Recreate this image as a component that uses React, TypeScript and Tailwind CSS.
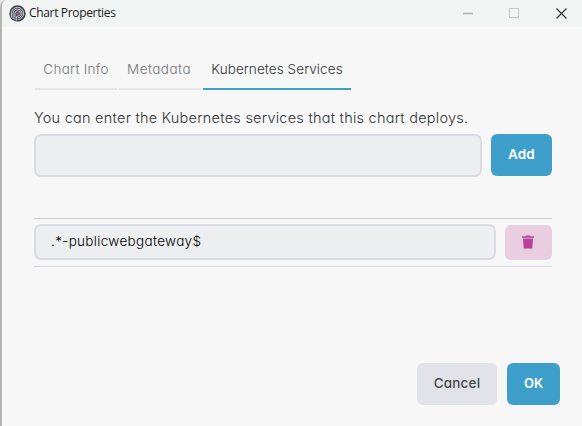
import { useState } from "react";

const tabs = [
  { label: "Chart Info", box: "w-[82px]", text: "tracking-[0.28px]" },
  { label: "Metadata", box: "w-[82px] pr-[2px]", text: "tracking-[0.45px]" },
  { label: "Kubernetes Services", box: "w-[148px]", text: "tracking-[0.08px]" },
];

function AppLogo() {
  return (
    <svg width="17" height="17" viewBox="0 0 17 17" fill="none">
      <circle cx="8.5" cy="8.5" r="8.2" fill="#41444d" />
      <g stroke="#d6d9dc" strokeWidth="0.9">
        <path d="M2.4 12.7V7.800a6.1 6.1 0 1 1 7 6.700" />
        <path d="M4.2 14V8a4.4 4.4 0 1 1 4.8 4.800" />
        <path d="M6 15.2V8.300a2.700 2.700 0 1 1 2.800 2.900H7.700v4.600" />
      </g>
      <circle cx="8.7" cy="8.5" r="1.3" fill="#d64cac" />
    </svg>
  );
}

function TrashIcon() {
  return (
    <svg className="mr-px mb-px" width="12" height="14" viewBox="0 0 12 14" fill="#bb419d">
      <path d="M4 0.400h4l0.700 0.900H12v1.400H0V1.300h3.300z" />
      <path d="M1 3.500h10l-0.600 9.200a1 1 0 0 1-1 0.900H2.600a1 1 0 0 1-1-0.900z" />
    </svg>
  );
}

export default function App() {
  const [active, setActive] = useState(2);
  return (
    <div className="h-[426px] w-[582px] overflow-hidden bg-[#e4e5e5]">
      <div className="flex h-[427px] w-[583px] flex-col overflow-hidden rounded-tl-[7px] border-l-2 border-[#b5b5b5] bg-[#f7f7f7] font-['Inter',sans-serif] text-[#44474a] [font-feature-settings:'cv11']">
        <header className="flex h-[27px] shrink-0 items-center bg-[#f2f4f3] pl-[7px]">
          <AppLogo />
          <h1 className="ml-[3px] pb-px font-['Open_Sans',sans-serif] text-[12px] leading-4 tracking-[-0.34px] whitespace-nowrap text-[#191b1b]">
            Chart Properties
          </h1>
          <div className="mr-[15px] ml-auto flex items-center pb-px">
            <svg width="106" height="12" viewBox="0 0 106 12" fill="none">
              <path d="M1 6.500h10" stroke="#aeb0af" strokeWidth="1.5" />
              <rect x="47.5" y="1.500" width="9" height="9" stroke="#c6c8c7" />
              <path d="M94.500 1.500l10 10M104.500 1.500l-10 10" stroke="#303232" strokeWidth="1.15" />
            </svg>
          </div>
        </header>
        <main className="flex grow flex-col pt-[23px] pr-[31px] pl-[32px]">
          <nav className="ml-px flex gap-[2px]">
            {tabs.map((tab, i) => (
              <button
                key={tab.label}
                onClick={() => setActive(i)}
                className={`h-[40px] border-b-2 pt-px text-[13.5px] font-light whitespace-nowrap ${tab.box} ${tab.text} ${
                  active === i ? "border-[#3e9fcb] text-[#303336]" : "border-[#e4e6e8] text-[#747678]"
                }`}
              >
                {tab.label}
              </button>
            ))}
          </nav>
          <label className="mt-[18px] h-5 text-[14.5px] leading-5 font-light tracking-[0.24px] whitespace-nowrap text-[#303336]">
            You can enter the Kubernetes services that this chart deploys.
          </label>
          <div className="mt-[6px] flex gap-[9px]">
            <input className="h-[43px] w-[448px] rounded-[7px] border-2 border-[#dadce3] bg-[#edeef0] px-4 outline-none" />
            <button className="h-[42px] w-[61px] rounded-[6px] bg-[#3e9fcb] pb-px text-[13.5px] font-semibold tracking-[0.15px] text-white">
              Add
            </button>
          </div>
          <div className="mt-[41px] flex h-[49px] w-[518px] items-center gap-[9px] border-t border-b border-t-[#cbcccf] border-b-[#d5d6df] pb-px">
            <input
              className="h-[36px] w-[462px] rounded-[7px] border-2 border-[#dadce3] bg-[#edeef0] px-[15px] pb-[2px] text-[13.5px] font-light tracking-[0.32px] text-black outline-none"
              defaultValue=".*-publicwebgateway$"
            />
            <button className="flex h-[35px] w-[47px] items-center justify-center rounded-[6px] bg-[#e9cde1]" aria-label="Delete">
              <TrashIcon />
            </button>
          </div>
          <footer className="mt-[96px] -mr-[8px] flex justify-end gap-[10px] text-[13.5px] font-medium">
            <button className="h-[42px] w-[80px] rounded-[6px] bg-[#e1e3e8] pb-px tracking-[0.2px]">Cancel</button>
            <button className="h-[42px] w-[53px] rounded-[6px] bg-[#3e9fcb] pb-px text-[13px] font-semibold text-white">OK</button>
          </footer>
        </main>
      </div>
    </div>
  );
}
